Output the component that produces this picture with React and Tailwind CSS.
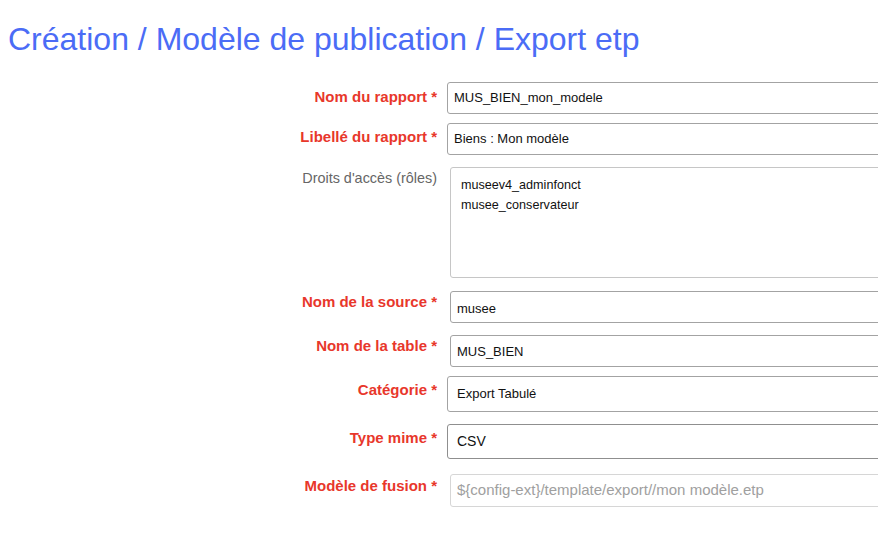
const rows = [
  { label: 'Nom du rapport', required: true, value: 'MUS_BIEN_mon_modele', mt: 'mt-[24px]', pt: 'pt-[5px]', box: 'ml-[10px] h-[32px] border-[#a3a3a3]', text: 'pl-[6px]' },
  { label: 'Libellé du rapport', required: true, value: 'Biens : Mon modèle', mt: 'mt-[9px]', pt: 'pt-[4px]', box: 'ml-[10px] h-[32px] border-[#a3a3a3]', text: 'pl-[6px]' },
]

const rows2 = [
  { label: 'Nom de la source', value: 'musee', mt: 'mt-[13px]', pt: 'pt-[1px]', box: 'ml-[13px] h-[32px] border-[#a3a3a3]', text: 'pl-[6px] pt-[3px]' },
  { label: 'Nom de la table', value: 'MUS_BIEN', mt: 'mt-[12px]', pt: 'pt-[1px]', box: 'ml-[13px] h-[32px] border-[#a3a3a3]', text: 'pl-[6px] pt-[2px]' },
  { label: 'Catégorie', value: 'Export Tabulé', mt: 'mt-[9px]', pt: 'pt-[4px]', box: 'ml-[10px] h-[36px] border-[#a3a3a3]', text: 'pl-[9px]' },
  { label: 'Type mime', value: 'CSV', mt: 'mt-[12px]', pt: 'pt-[4px]', box: 'ml-[10px] h-[35px] border-[#8f8f8f]', text: 'pl-[9px] text-[14px]' },
]

function Label({ children, required, pt }) {
  return (
    <div className={`w-[437px] shrink-0 text-right leading-[20px] ${pt} ${required ? 'text-[15px] font-bold text-[#e8372b]' : 'text-[14.4px] text-[#666666]'}`}>
      {children}
      {required && ' *'}
    </div>
  )
}

function Row({ row }) {
  return (
    <div className={`flex items-start ${row.mt}`}>
      <Label required pt={row.pt}>{row.label}</Label>
      <div className={`flex w-[480px] shrink-0 items-center rounded-[3px] border bg-white text-[13px] text-[#111] ${row.box} ${row.text}`}>
        {row.value}
      </div>
    </div>
  )
}

export default function App() {
  return (
    <div className="h-[549px] w-full overflow-hidden bg-white font-['Liberation_Sans',Arial,sans-serif]">
      <h1 className="whitespace-nowrap pl-[8px] pt-[20px] text-[32px] leading-[38px] text-[#4b6cf6]">
        Création / Modèle de publication / Export etp
      </h1>

      {rows.map((r) => (
        <Row key={r.label} row={r} />
      ))}

      <div className="mt-[12px] flex items-start">
        <Label pt="pt-[1px]">Droits d'accès (rôles)</Label>
        <div className="ml-[13px] h-[111px] w-[480px] shrink-0 rounded-[3px] border border-[#c6c6c6] pl-[10px] pt-[7px] text-[12.6px] leading-[20px] text-[#111]">
          <div>museev4_adminfonct</div>
          <div>musee_conservateur</div>
        </div>
      </div>

      {rows2.map((r) => (
        <Row key={r.label} row={r} />
      ))}

      <div className="mt-[15px] flex items-start">
        <Label required pt="pt-[2px]">Modèle de fusion</Label>
        <div className="ml-[13px] flex h-[33px] w-[480px] shrink-0 items-center rounded-[3px] border border-[#d6d6d6] pl-[6px] text-[15px] text-[#a0a0a0]">
          {'${config-ext}/template/export//mon modèle.etp'}
        </div>
      </div>
    </div>
  )
}
